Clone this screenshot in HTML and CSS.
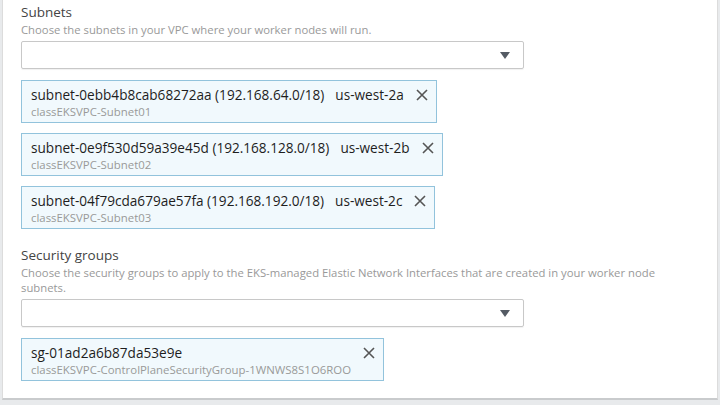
FILE: index.html
```html
<!DOCTYPE html>
<html>
<head>
<meta charset="utf-8">
<link rel="stylesheet" href="styles.css">
</head>
<body>
<div class="panel">
  <section class="field">
    <div class="label">Subnets</div>
    <div class="desc">Choose the subnets in your VPC where your worker nodes will run.</div>
    <div class="select"><span class="caret"></span></div>
    <div class="chips">
      <div class="chip">
        <div class="chip-body">
          <div class="chip-main"><span>subnet-0ebb4b8cab68272aa (192.168.64.0/18)</span><span class="zone">us-west-2a</span></div>
          <div class="chip-sub">classEKSVPC-Subnet01</div>
        </div>
        <svg class="x" viewBox="0 0 12 12"><path d="M1 1L11 11M11 1L1 11"/></svg>
      </div>
      <div class="chip">
        <div class="chip-body">
          <div class="chip-main"><span>subnet-0e9f530d59a39e45d (192.168.128.0/18)</span><span class="zone">us-west-2b</span></div>
          <div class="chip-sub">classEKSVPC-Subnet02</div>
        </div>
        <svg class="x" viewBox="0 0 12 12"><path d="M1 1L11 11M11 1L1 11"/></svg>
      </div>
      <div class="chip">
        <div class="chip-body">
          <div class="chip-main"><span>subnet-04f79cda679ae57fa (192.168.192.0/18)</span><span class="zone">us-west-2c</span></div>
          <div class="chip-sub">classEKSVPC-Subnet03</div>
        </div>
        <svg class="x" viewBox="0 0 12 12"><path d="M1 1L11 11M11 1L1 11"/></svg>
      </div>
    </div>
  </section>
  <section class="field second">
    <div class="label">Security groups</div>
    <div class="desc">Choose the security groups to apply to the EKS-managed Elastic Network Interfaces that are created in your worker node subnets.</div>
    <div class="select"><span class="caret"></span></div>
    <div class="chips">
      <div class="chip">
        <div class="chip-body">
          <div class="chip-main"><span>sg-01ad2a6b87da53e9e</span></div>
          <div class="chip-sub">classEKSVPC-ControlPlaneSecurityGroup-1WNWS8S1O6ROO</div>
        </div>
        <svg class="x" viewBox="0 0 12 12"><path d="M1 1L11 11M11 1L1 11"/></svg>
      </div>
    </div>
  </section>
</div>
</body>
</html>
```

FILE: styles.css
```css
html, body {
  margin: 0;
  padding: 0;
}
body {
  background: #e8eaec;
  width: 720px;
  height: 405px;
  overflow: hidden;
  font-family: "Open Sans", "Noto Sans", sans-serif;
}
.panel {
  margin: 0 2px;
  background: #fff;
  border-left: 1px solid #dcdcdc;
  border-right: 1px solid #dcdcdc;
  border-bottom: 2px solid #c9cbcd;
  padding: 3px 18px 17px 18px;
}
.label {
  font-size: 13.5px;
  line-height: 18px;
  color: #444;
}
.desc {
  font-size: 11.3px;
  line-height: 15px;
  color: #999;
  margin-top: 1px;
  max-width: 670px;
}
.select {
  margin-top: 4px;
  width: 488px;
  height: 26px;
  border: 1px solid #c8c8c8;
  border-radius: 2px;
  box-shadow: 0 1px 1px rgba(0,0,0,0.06);
  display: flex;
  align-items: center;
  justify-content: flex-end;
  padding-right: 13px;
}
.caret {
  width: 0;
  height: 0;
  border-left: 5px solid transparent;
  border-right: 5px solid transparent;
  border-top: 7px solid #545b64;
}
.chips {
  margin-top: 11px;
  display: flex;
  flex-direction: column;
  align-items: flex-start;
  gap: 10px;
}
.chip {
  display: flex;
  align-items: flex-start;
  background: #f1f9fd;
  border: 1px solid #92c3dc;
  padding: 5px 8px 3px 9px;
}
.chip-main {
  font-size: 13.6px;
  line-height: 17px;
  color: #1e1e1e;
  display: flex;
}
.zone {
  margin-left: 11px;
}
.chip-sub {
  font-size: 11.4px;
  line-height: 15px;
  margin-top: 1px;
  color: #999;
}
.x {
  width: 12px;
  height: 12px;
  margin-left: 12px;
  margin-top: 3px;
  stroke: #555;
  stroke-width: 1.6;
  fill: none;
}
.second {
  margin-top: 17px;
}
```
